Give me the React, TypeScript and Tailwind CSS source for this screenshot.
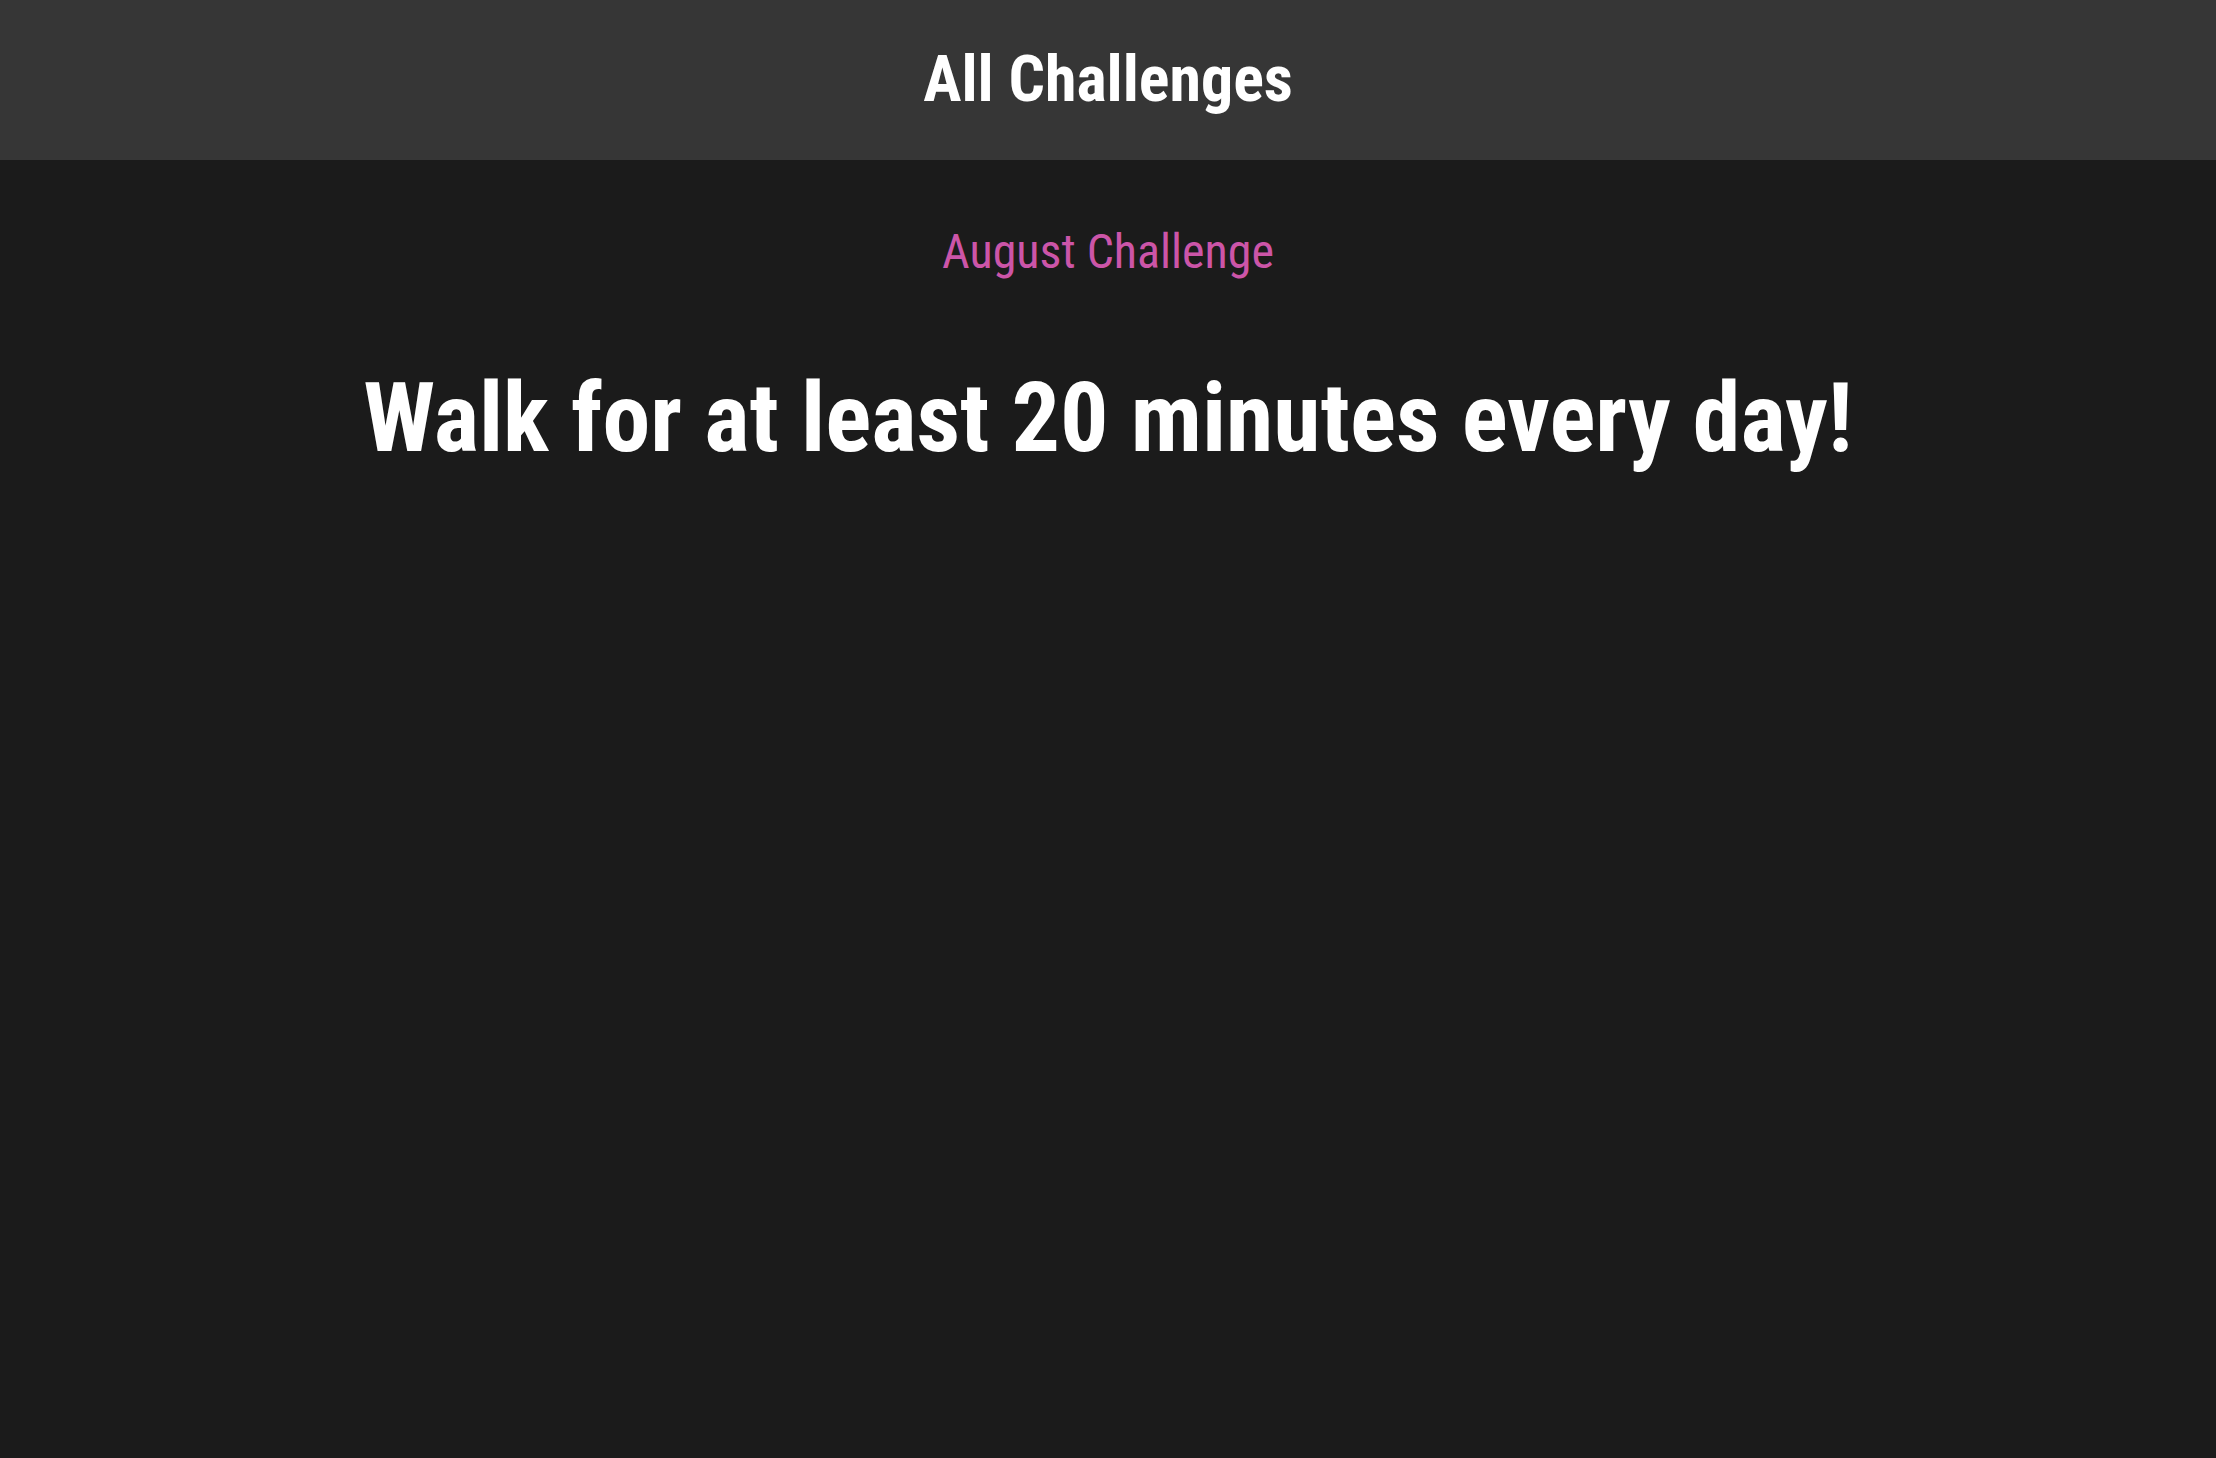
export default function App() {
  return (
    <div className="min-h-screen w-full bg-[#1b1b1b] font-['Roboto_Condensed','Roboto',sans-serif] [font-stretch:condensed]">
      {/* Header */}
      <header className="h-[160px] bg-[#363636] flex items-center justify-center">
        <h1 className="text-[64px] font-bold text-white leading-none">All Challenges</h1>
      </header>

      {/* Challenge */}
      <main className="flex flex-col items-center pt-[62px]">
        <p className="text-[48px] leading-[60px] text-[#cc55a8]">August Challenge</p>
        <h2 className="mt-[78px] text-[96px] leading-[116px] font-bold text-white text-center">
          Walk for at least 20 minutes every day!
        </h2>
      </main>
    </div>
  );
}
